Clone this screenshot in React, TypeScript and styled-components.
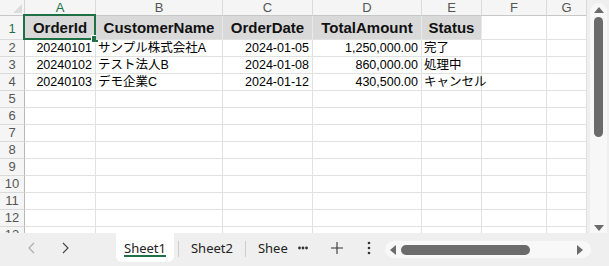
import React from 'react'
import styled, { createGlobalStyle } from 'styled-components';

const GlobalStyle = createGlobalStyle`
    html, body {
        margin: 0;
        padding: 0;
        background: #ffffff;
    }
    body {
        font-family: "Liberation Sans", "Noto Sans CJK JP", sans-serif;
    }
`;

const columns = [
    { key: 'A', width: 71 },
    { key: 'B', width: 127 },
    { key: 'C', width: 90 },
    { key: 'D', width: 109 },
    { key: 'E', width: 60 },
    { key: 'F', width: 65 },
    { key: 'G', width: 40 },
];

const headers = ['OrderId', 'CustomerName', 'OrderDate', 'TotalAmount', 'Status'];

type Align = 'left' | 'right';
const rows: { text: string; align: Align }[][] = [
    [
        { text: '20240101', align: 'right' },
        { text: 'サンプル株式会社A', align: 'left' },
        { text: '2024-01-05', align: 'right' },
        { text: '1,250,000.00', align: 'right' },
        { text: '完了', align: 'left' },
    ],
    [
        { text: '20240102', align: 'right' },
        { text: 'テスト法人B', align: 'left' },
        { text: '2024-01-08', align: 'right' },
        { text: '860,000.00', align: 'right' },
        { text: '処理中', align: 'left' },
    ],
    [
        { text: '20240103', align: 'right' },
        { text: 'デモ企業C', align: 'left' },
        { text: '2024-01-12', align: 'right' },
        { text: '430,500.00', align: 'right' },
        { text: 'キャンセル', align: 'left' },
    ],
];

const emptyRows = [5, 6, 7, 8, 9, 10, 11, 12, 13];

const template = `25px ${columns.map(c => c.width + 'px').join(' ')}`;

const App = () => {
  return (
    <>
        <GlobalStyle />
        <Window>
            <Main>
                <Sheet>
                    <Grid>
                        <Corner />
                        {columns.map(c => (
                            <ColHead key={c.key} active={c.key === 'A'}>{c.key}</ColHead>
                        ))}

                        <RowHead active tall>1</RowHead>
                        {columns.map((c, i) => (
                            <HeaderCell key={c.key} filled={i < headers.length}>
                                {headers[i] || ''}
                                {i === 0 && <Selection><Handle /></Selection>}
                            </HeaderCell>
                        ))}

                        {rows.map((r, ri) => (
                            <React.Fragment key={ri}>
                                <RowHead>{ri + 2}</RowHead>
                                {columns.map((c, ci) => (
                                    <Cell key={c.key} align={r[ci] ? r[ci].align : 'left'}>
                                        {r[ci] ? r[ci].text : ''}
                                    </Cell>
                                ))}
                            </React.Fragment>
                        ))}

                        {emptyRows.map(n => (
                            <React.Fragment key={n}>
                                <RowHead>{n}</RowHead>
                                {columns.map(c => <Cell key={c.key} align="left" />)}
                            </React.Fragment>
                        ))}
                    </Grid>
                </Sheet>
                <VScroll>
                    <VTrack>
                        <ArrowUp />
                        <VThumb />
                        <Spacer />
                        <ArrowDown />
                    </VTrack>
                </VScroll>
            </Main>
            <Bottom>
                <Nav>
                    <NavBtn disabled>
                        <svg width="10" height="12" viewBox="0 0 10 12"><path d="M7 1 L2 6 L7 11" fill="none" stroke="currentColor" strokeWidth="1.1" /></svg>
                    </NavBtn>
                    <NavBtn>
                        <svg width="10" height="12" viewBox="0 0 10 12"><path d="M3 1 L8 6 L3 11" fill="none" stroke="currentColor" strokeWidth="1.1" /></svg>
                    </NavBtn>
                </Nav>
                <Tab active>Sheet1</Tab>
                <Sep />
                <Tab>Sheet2</Tab>
                <Sep />
                <Tab>Shee</Tab>
                <More>
                    <svg width="10" height="4" viewBox="0 0 10 4">
                        <circle cx="1.5" cy="2" r="1.4" fill="#333" />
                        <circle cx="5" cy="2" r="1.4" fill="#333" />
                        <circle cx="8.5" cy="2" r="1.4" fill="#333" />
                    </svg>
                </More>
                <Tool gap={13}>
                    <svg width="14" height="14" viewBox="0 0 14 14"><path d="M7 1 V13 M1 7 H13" stroke="#333" strokeWidth="1.1" /></svg>
                </Tool>
                <Tool gap={0}>
                    <svg width="4" height="14" viewBox="0 0 4 14"><circle cx="2" cy="2" r="1.3" fill="#333" /><circle cx="2" cy="7" r="1.3" fill="#333" /><circle cx="2" cy="12" r="1.3" fill="#333" /></svg>
                </Tool>
                <HScroll>
                    <ArrowLeft />
                    <HThumb />
                    <Spacer />
                    <ArrowRight />
                </HScroll>
            </Bottom>
        </Window>
    </>
  )
}

export default App;

const Window = styled.div`
    width: 609px;
    height: 266px;
    display: flex;
    flex-direction: column;
    overflow: hidden;
    background: #ffffff;
`;
const Main = styled.div`
    flex: 1;
    display: flex;
    min-height: 0;
`;
const Sheet = styled.div`
    width: 587px;
    overflow: hidden;
`;
const Grid = styled.div`
    display: grid;
    grid-template-columns: ${template};
    grid-template-rows: 16px 24px repeat(12, 17px);
`;
const Corner = styled.div`
    background: #f5f5f5;
    border-right: 1px solid #d4d4d4;
    border-bottom: 1px solid #c8c8c8;
    position: relative;
    &::after{
        content: "";
        position: absolute;
        right: 2px;
        bottom: 2px;
        border-left: 9px solid transparent;
        border-bottom: 9px solid #dcdcdc;
    }
`;
const ColHead = styled.div<{ active?: boolean }>`
    background: #f5f5f5;
    border-right: 1px solid #dadada;
    border-bottom: 1px solid #c8c8c8;
    color: ${p => p.active ? '#217346' : '#555555'};
    font-size: 13px;
    line-height: 15px;
    text-align: center;
`;
const RowHead = styled.div<{ active?: boolean; tall?: boolean }>`
    background: #f5f5f5;
    border-right: 1px solid #b8b8b8;
    border-bottom: 1px solid #dadada;
    color: ${p => p.active ? '#217346' : '#555555'};
    font-size: 13px;
    display: flex;
    align-items: flex-end;
    justify-content: center;
    padding-bottom: ${p => p.tall ? '2px' : '0px'};
    line-height: 16px;
`;
const HeaderCell = styled.div<{ filled?: boolean }>`
    position: relative;
    background: ${p => p.filled ? '#d9d9d9' : '#ffffff'};
    border-right: 1px solid ${p => p.filled ? '#e8e8e8' : '#e1e1e1'};
    border-bottom: 1px solid #e1e1e1;
    font-weight: bold;
    font-size: 15px;
    color: #111111;
    display: flex;
    align-items: flex-end;
    justify-content: center;
    padding-bottom: 3px;
    white-space: nowrap;
`;
const Selection = styled.div`
    position: absolute;
    left: -2px;
    top: -2px;
    right: -1px;
    bottom: -1px;
    border: 2px solid #1f7145;
    pointer-events: none;
`;
const Handle = styled.div`
    position: absolute;
    right: -5px;
    bottom: -5px;
    width: 6px;
    height: 6px;
    background: #1f7145;
    border: 1px solid #ffffff;
`;
const Cell = styled.div<{ align: Align }>`
    border-right: 1px solid #e1e1e1;
    border-bottom: 1px solid #e1e1e1;
    font-size: 12.5px;
    color: #000000;
    display: flex;
    align-items: flex-end;
    justify-content: ${p => p.align === 'right' ? 'flex-end' : 'flex-start'};
    padding: 0 3px 0 2px;
    line-height: 15px;
    white-space: nowrap;
    overflow: visible;
`;
const VScroll = styled.div`
    width: 22px;
    background: #efefef;
    padding: 3px 2px 0 3px;
    box-sizing: border-box;
`;
const VTrack = styled.div`
    height: 100%;
    background: #f7f7f7;
    border-radius: 9px 9px 0 0;
    display: flex;
    flex-direction: column;
    align-items: center;
    padding-top: 4px;
    box-sizing: border-box;
`;
const ArrowUp = styled.div`
    width: 0;
    height: 0;
    border-left: 5px solid transparent;
    border-right: 5px solid transparent;
    border-bottom: 6px solid #6b6b6b;
`;
const ArrowDown = styled.div`
    width: 0;
    height: 0;
    border-left: 5px solid transparent;
    border-right: 5px solid transparent;
    border-top: 6px solid #6b6b6b;
    margin-bottom: 2px;
`;
const VThumb = styled.div`
    width: 9px;
    height: 120px;
    margin-top: 4px;
    background: #6b6b6b;
    border-radius: 5px;
`;
const Spacer = styled.div`
    flex: 1;
`;
const Bottom = styled.div`
    height: 33px;
    flex-shrink: 0;
    background: #efefef;
    display: flex;
    align-items: flex-start;
`;
const Nav = styled.div`
    width: 116px;
    height: 30px;
    display: flex;
    align-items: center;
    padding-left: 26px;
    box-sizing: border-box;
    gap: 21px;
`;
const NavBtn = styled.div<{ disabled?: boolean }>`
    width: 12px;
    display: flex;
    justify-content: center;
    color: ${p => p.disabled ? '#a8a8a8' : '#444444'};
`;
const Tab = styled.div<{ active?: boolean }>`
    height: 29px;
    padding: 0 8px;
    display: flex;
    align-items: center;
    font-family: "Noto Sans", "Liberation Sans", sans-serif;
    font-size: 13px;
    color: #222222;
    background: ${p => p.active ? '#ffffff' : 'transparent'};
    border-radius: 0 0 6px 6px;
    position: relative;
    ${p => p.active ? `
        &::after{
            content: "";
            position: absolute;
            left: 8px;
            right: 8px;
            bottom: 5px;
            height: 2px;
            background: #1f7145;
        }
    ` : ''}
`;
const Sep = styled.div`
    width: 1px;
    height: 16px;
    margin: 8px 4px 0;
    background: #cfcfcf;
`;
const More = styled.div`
    height: 29px;
    display: flex;
    align-items: center;
    margin-left: 2px;
`;
const Tool = styled.div<{ gap: number }>`
    height: 29px;
    width: 32px;
    display: flex;
    align-items: center;
    justify-content: center;
    margin-left: ${p => p.gap}px;
`;
const HScroll = styled.div`
    margin-top: 8px;
    width: 206px;
    height: 17px;
    background: #f8f8f8;
    border-radius: 9px;
    display: flex;
    align-items: center;
    padding: 0 5px 0 5px;
    box-sizing: border-box;
`;
const ArrowLeft = styled.div`
    width: 0;
    height: 0;
    border-top: 5px solid transparent;
    border-bottom: 5px solid transparent;
    border-right: 6px solid #6b6b6b;
`;
const ArrowRight = styled.div`
    width: 0;
    height: 0;
    border-top: 5px solid transparent;
    border-bottom: 5px solid transparent;
    border-left: 6px solid #6b6b6b;
    margin-right: 3px;
`;
const HThumb = styled.div`
    width: 129px;
    height: 10px;
    margin-left: 5px;
    background: #6b6b6b;
    border-radius: 5px;
`;
